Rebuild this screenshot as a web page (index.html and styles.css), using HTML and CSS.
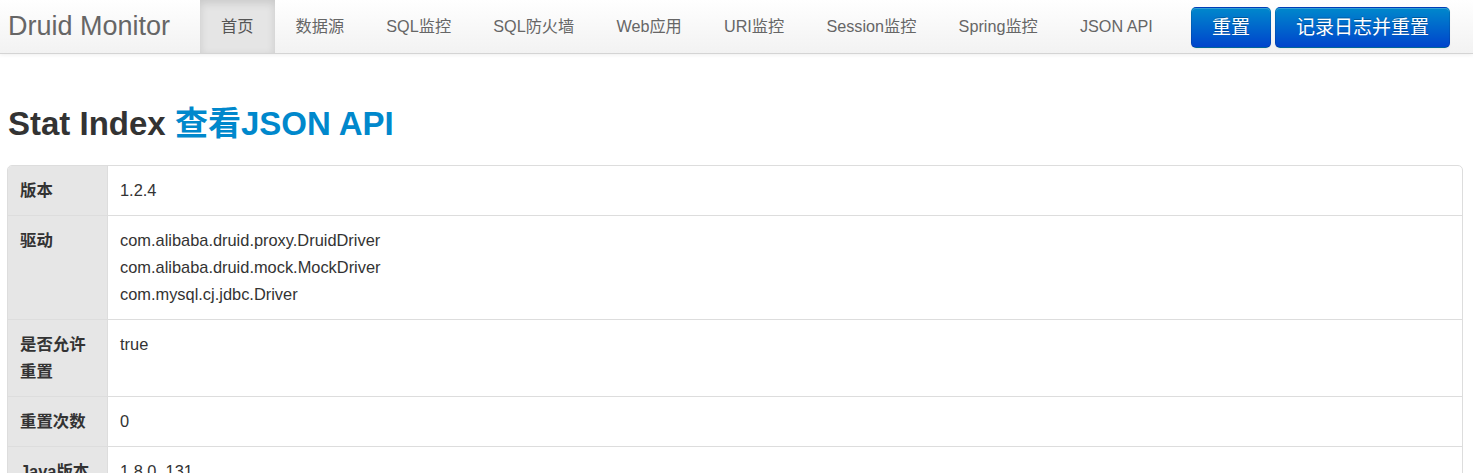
FILE: index.html
```html
<!DOCTYPE html>
<html lang="zh-CN">
<head>
<meta charset="utf-8">
<title>Druid Stat Index</title>
<link rel="stylesheet" href="styles.css">
</head>
<body>
<header class="navbar">
  <a class="brand" href="#">Druid Monitor</a>
  <ul class="nav">
    <li class="active"><a href="#">首页</a></li>
    <li><a href="#">数据源</a></li>
    <li><a href="#">SQL监控</a></li>
    <li><a href="#">SQL防火墙</a></li>
    <li><a href="#">Web应用</a></li>
    <li><a href="#">URI监控</a></li>
    <li><a href="#">Session监控</a></li>
    <li><a href="#">Spring监控</a></li>
    <li><a href="#">JSON API</a></li>
  </ul>
  <div class="actions">
    <button class="btn">重置</button>
    <button class="btn">记录日志并重置</button>
  </div>
</header>
<main class="container">
  <h3 class="title">Stat Index <a href="#">查看JSON API</a></h3>
  <table class="stat">
    <tr><th>版本</th><td>1.2.4</td></tr>
    <tr><th>驱动</th><td>com.alibaba.druid.proxy.DruidDriver<br>com.alibaba.druid.mock.MockDriver<br>com.mysql.cj.jdbc.Driver</td></tr>
    <tr><th>是否允许重置</th><td>true</td></tr>
    <tr><th>重置次数</th><td>0</td></tr>
    <tr><th>Java版本</th><td>1.8.0_131</td></tr>
    <tr><th>JVM名称</th><td>Java HotSpot(TM) 64-Bit Server VM</td></tr>
  </table>
</main>
</body>
</html>
```
FILE: styles.css
```css
html, body {
  margin: 0;
  padding: 0;
  overflow: hidden;
}
body {
  font-family: "Liberation Sans", "Noto Sans CJK SC", sans-serif;
  font-size: 16.2px;
  line-height: 27px;
  color: #333;
  background: #fff;
}
.navbar {
  display: flex;
  align-items: flex-start;
  height: 53px;
  background: linear-gradient(to bottom, #ffffff, #f2f2f2);
  border-bottom: 1px solid #d4d4d4;
  box-shadow: 0 1px 4px rgba(0, 0, 0, 0.065);
  padding-right: 23px;
}
.brand {
  display: block;
  box-sizing: border-box;
  width: 200px;
  padding-left: 8px;
  font-size: 27px;
  line-height: 53px;
  color: #666;
  text-decoration: none;
}
.nav {
  display: flex;
  list-style: none;
  margin: 0;
  padding: 0;
}
.nav li a {
  display: block;
  padding: 0 21.2px 0 21px;
  line-height: 53px;
  color: #666;
  text-decoration: none;
}
.nav li.active a {
  color: #555;
  background: #e5e5e5;
  box-shadow: inset 0 3px 8px rgba(0, 0, 0, 0.125);
}
.actions {
  margin-left: auto;
  display: flex;
  gap: 4px;
  padding-top: 7px;
}
.btn {
  font-family: "Liberation Sans", "Noto Sans CJK SC", sans-serif;
  font-size: 19px;
  line-height: 39px;
  height: 41px;
  padding: 0 20px;
  color: #fff;
  border: 1px solid #0044cc;
  border-color: rgba(0, 0, 0, 0.1) rgba(0, 0, 0, 0.1) rgba(0, 0, 0, 0.25);
  border-radius: 5px;
  background: linear-gradient(to bottom, #0088cc, #0044cc);
  box-shadow: inset 0 1px 0 rgba(255, 255, 255, 0.2), 0 1px 2px rgba(0, 0, 0, 0.05);
  text-shadow: 0 -1px 0 rgba(0, 0, 0, 0.25);
  cursor: pointer;
}
.container {
  margin: 0 10px 0 7px;
}
.title {
  margin: 50px 0 21px 1px;
  font-size: 33px;
  line-height: 40px;
  font-weight: bold;
  color: #333;
}
.title a {
  color: #0088cc;
  text-decoration: none;
}
.stat {
  width: 100%;
  border-collapse: separate;
  border-spacing: 0;
  border: 1px solid #ddd;
  border-radius: 5px;
  table-layout: fixed;
  font-size: 16.4px;
}
.stat th,
.stat td {
  padding: 11px 12px;
  text-align: left;
  vertical-align: top;
  border-top: 1px solid #ddd;
}
.stat tr:first-child th,
.stat tr:first-child td {
  border-top: 0;
}
.stat th {
  width: 75px;
  background: #e6e6e6;
  font-weight: bold;
}
.stat tr:first-child th {
  border-top-left-radius: 4px;
}
.stat td {
  border-left: 1px solid #ddd;
}
```
